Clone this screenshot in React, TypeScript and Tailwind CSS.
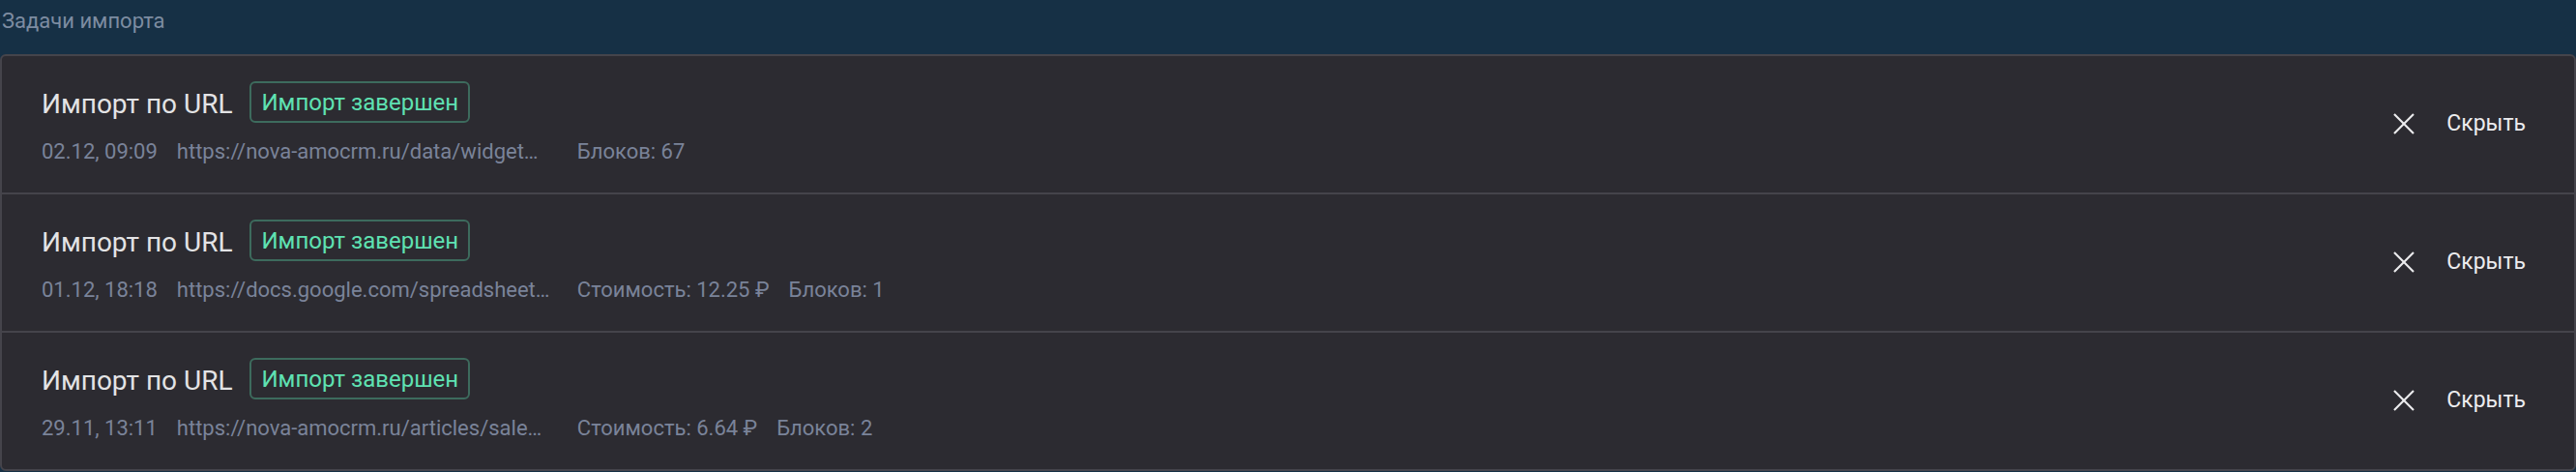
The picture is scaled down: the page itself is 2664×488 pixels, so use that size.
import React from "react";

type Row = {
  date: string;
  url: string;
  cost?: string;
  blocks: string;
};

const rows: Row[] = [
  { date: "02.12, 09:09", url: "https://nova-amocrm.ru/data/widget…", blocks: "Блоков: 67" },
  { date: "01.12, 18:18", url: "https://docs.google.com/spreadsheet…", cost: "Стоимость: 12.25 ₽", blocks: "Блоков: 1" },
  { date: "29.11, 13:11", url: "https://nova-amocrm.ru/articles/sale…", cost: "Стоимость: 6.64 ₽", blocks: "Блоков: 2" },
];

function XIcon() {
  return (
    <svg width="24" height="24" viewBox="0 0 24 24" fill="none" stroke="currentColor" strokeWidth="2.2" strokeLinecap="butt">
      <line x1="2" y1="2" x2="22" y2="22" />
      <line x1="22" y1="2" x2="2" y2="22" />
    </svg>
  );
}

export default function App() {
  return (
    <div className="w-[2664px] h-[488px] bg-[#163045] font-['Roboto',sans-serif] overflow-hidden">
      <div className="h-[56px] pt-[6px] pl-[2px] text-[22px] leading-[32px] text-[#7d8ca1]">Задачи импорта</div>
      <div className="border-2 border-[#45444b] rounded-[6px] bg-[#2c2b31]">
        {rows.map((r, i) => (
          <div
            key={i}
            className={`flex items-center justify-between pl-[41px] pr-[50px] pt-[26px] pb-[27px] ${i > 0 ? "border-t-2 border-[#45444b]" : ""}`}
          >
            <div className="flex flex-col">
              <div className="flex items-center gap-[18px] h-[43px]">
                <span className="text-[28px] leading-[38px] pt-[5px] text-[#e3e3e5] whitespace-nowrap">Импорт по URL</span>
                <span className="h-[43px] border-2 border-[#3d6b5d] rounded-[6px] px-[10px] pt-[2px] text-[24px] leading-[37px] text-[#5fe2b2] whitespace-nowrap">
                  Импорт завершен
                </span>
              </div>
              <div className="mt-[15px] flex items-center gap-[20px] text-[22px] leading-[30px] text-[#7a8399] whitespace-nowrap">
                <span>{r.date}</span>
                <span className="w-[394px]">{r.url}</span>
                {r.cost && <span>{r.cost}</span>}
                <span>{r.blocks}</span>
              </div>
            </div>
            <button className="flex items-center gap-[32px] text-[#ececee]">
              <XIcon />
              <span className="text-[23px] leading-[30px]">Скрыть</span>
            </button>
          </div>
        ))}
      </div>
    </div>
  );
}
